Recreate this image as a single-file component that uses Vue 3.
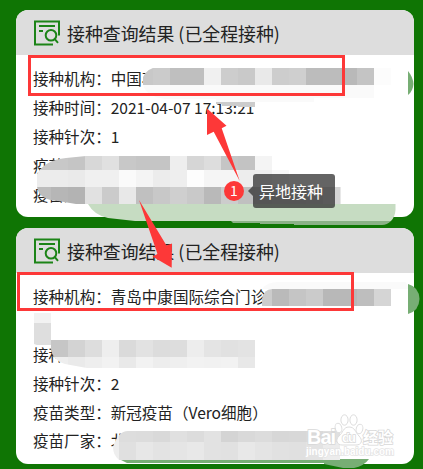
<template>
  <div class="page">
    <section v-for="(card, i) in cards" :key="i" class="card" :class="'card-' + (i + 1)">
      <header class="card-header">
        <svg class="card-icon" viewBox="0 0 26 26">
          <path d="M25 15.500V1.500H1V24.500H19M5 6H21M5 11H9" />
          <circle cx="17" cy="15.200" r="5.300" />
          <path d="M20.800 19.200L24 22.800" />
        </svg>
        <h2>接种查询结果 (已全程接种)</h2>
      </header>
      <ul class="rows">
        <li v-for="(row, n) in card" :key="n">
          <template v-if="row.label">
            <span class="label">{{ row.label }}：</span>
            <span>{{ row.value }}</span>
          </template>
        </li>
      </ul>
    </section>

    <!-- 马赛克与标注层 -->
    <svg class="overlay" viewBox="0 0 423 469">
      <defs>
        <clipPath id="clip-a">
          <path d="M143 85V77Q147 68 158 67H392V96H143Z" />
        </clipPath>
        <clipPath id="clip-b">
          <path d="M37 187V174Q45 160 66 158L86 156H341V204H76L58 201Q39 200 37 187Z" />
        </clipPath>
        <clipPath id="clip-c">
          <path d="M51 340H255V368H87L65 364Q52 360 51 349Z" />
        </clipPath>
        <clipPath id="clip-d">
          <path d="M113 447Q118 431 128 431H341V460H119Q113 455 113 447Z" />
        </clipPath>
        <clipPath id="clip-e">
          <path d="M262 306V299Q264 289 272 289H391V306Z" />
        </clipPath>
      </defs>

      <path class="smear" d="M70 204H395.500V210Q395 217 391 221H135L108 218Q94 215 88 204Z" />
      <path class="smear-dark" d="M231 221H391Q387 225 382 225H294V224H260V223H233Z" />
      <path class="smear-mid" d="M119 459H369Q364 466 354 468H343L324 464V463H127Z" />
      <path class="smear-mid" d="M408 71Q413 77 413.500 84Q413 91 408 95Z" />
      <path class="smear-mid" d="M408 284Q419 287 419.500 299Q419 311 408 314Z" />
      <path class="faint" d="M143 85H374V98H314V102H216V99H165Q147 97 143 85Z" />
      <path class="tick" d="M216 102H255V107H238V106H222V104H216Z" />
      <path class="faint" d="M262 289Q267 282 278 282H405Q408 283 408 289Z" />
      <path class="blot" d="M34 313H51V345H37L34 344Z" />
      <rect class="blot-top" x="34" y="313" width="17" height="10" />

      <g v-for="m in mosaics" :key="m.clip" :clip-path="`url(#${m.clip})`" shape-rendering="crispEdges">
        <rect
          v-for="(c, n) in cells(m)"
          :key="n"
          :x="c.x"
          :y="c.y"
          width="17"
          :height="c.h"
          :fill="c.fill"
        />
      </g>

      <g class="marks">
        <rect x="29.500" y="56.500" width="314" height="38" />
        <rect x="18.500" y="273.500" width="334" height="36" />
      </g>
      <g class="arrows">
        <path d="M207 108.500L226.500 125.700L221.700 128.300L239.700 181L213.700 131.700L207 135Z" />
        <path d="M139 200L166.500 245.500L172 243.500L171.700 267.700L152.500 256.500L157.500 254Z" />
      </g>
    </svg>

    <span class="badge">1</span>
    <div class="tooltip">异地接种</div>

    <svg class="watermark" viewBox="0 0 100 48">
      <g class="paw">
        <ellipse cx="28.500" cy="19" rx="3.300" ry="4.800" transform="rotate(-15 28.500 19)" />
        <ellipse cx="34.500" cy="11" rx="3.600" ry="5.200" />
        <ellipse cx="43.500" cy="11" rx="3.600" ry="5.200" />
        <ellipse cx="49.500" cy="20" rx="3.300" ry="4.800" transform="rotate(15 49.500 20)" />
        <path d="M39 18C33 18 33 24 29 27C25 31 27 36 32 36H46C52 36 53 31 49 27C45 23 45 18 39 18Z" />
      </g>
      <text class="brand" x="-3" y="35" textLength="29">Bai</text>
      <text class="du" x="32" y="33" textLength="14">du</text>
      <text class="brand cn" x="53" y="34" textLength="30">经验</text>
      <text class="url" x="-4" y="46" textLength="88">jingyan.baidu.com</text>
    </svg>
  </div>
</template>

<script setup>
const cards = [
  [
    { label: '接种机构', value: '中国石' },
    { label: '接种时间', value: '2021-04-07 17:13:21' },
    { label: '接种针次', value: '1' },
    { label: '疫苗类型', value: '' },
    { label: '疫苗厂家', value: '' },
  ],
  [
    { label: '接种机构', value: '青岛中康国际综合门诊' },
    // 机构名称折行后留下的空行
    { label: '', value: '' },
    { label: '接种时间', value: '' },
    { label: '接种针次', value: '2' },
    { label: '疫苗类型', value: '新冠疫苗（Vero细胞）' },
    { label: '疫苗厂家', value: '北' },
  ],
]

// 每行: 起始 x, y, 高度, 灰度
const mosaics = [
  {
    clip: 'clip-a',
    rows: [[136, 68, 17, 'c8 cb bf bf f0 cd c9 e9 cd cf bc bc b9 c4 fc']],
  },
  {
    clip: 'clip-b',
    rows: [
      [34, 156, 14, 'c8 c8 c5 d8 e0 c8 c5 c5 ee d6 dd c5 c3 f4'],
      [34, 170, 17, 'ec ec ea f0 f0 fa f4 ec ee fd f5 f5 ed ee f7'],
      [34, 187, 17, 'bd b6 b3 e1 cb e8 c0 c8 cf c9 b9 cc c0 c4 c8 c5 cc d5 e8'],
    ],
  },
  {
    clip: 'clip-c',
    rows: [
      [51, 340, 17, 'c6 d3 dd ee da e2 dc dd ed e4 e1 e3'],
      [51, 357, 11, 'ee ea ee f2 e9 f2 ed ef f2 f1 f2 e8'],
    ],
  },
  {
    clip: 'clip-d',
    rows: [
      [102, 431, 11, 'ee dd dc d9 e0 dc e2 d4 d9 dc d7 d8 da e0'],
      [102, 442, 18, 'ee e0 e7 e3 e5 e8 e2 e1 e8 e4 e1 e0 e3 ec'],
    ],
  },
  {
    clip: 'clip-e',
    rows: [[255, 289, 17, 'cc ba c5 cb b8 b8 be d5']],
  },
]

function cells(m) {
  return m.rows.flatMap(([x, y, h, tones]) =>
    tones.split(' ').map((t, n) => ({ x: x + n * 17, y, h, fill: `#${t}${t}${t}` }))
  )
}
</script>

<style>
body {
  margin: 0;
}
</style>

<style scoped>
.page {
  position: relative;
  box-sizing: border-box;
  width: 423px;
  height: 469px;
  padding: 10px 9px 0 16px;
  overflow: hidden;
  background: #0f7504;
  font-family: "Noto Sans CJK SC", sans-serif;
  color: #222;
}

.card {
  height: 207px;
  margin-bottom: 11px;
  border-radius: 12px;
  background: #fff;
  overflow: hidden;
}

.card-2 {
  height: 236px;
}

.card-header {
  display: flex;
  align-items: center;
  gap: 7px;
  height: 45px;
  padding: 0 18px;
  background: #ddd;
}

.card-icon {
  width: 26px;
  height: 26px;
  fill: none;
  stroke: #1c8417;
  stroke-width: 2;
}

h2 {
  margin: 0;
  font-size: 17.900px;
  font-weight: 400;
  line-height: 26px;
  white-space: nowrap;
}

.rows {
  margin: 0;
  padding: 9px 0 0 17px;
  list-style: none;
}

.rows li {
  display: flex;
  height: 28.900px;
  font-size: 15.550px;
  line-height: 29px;
  white-space: nowrap;
}

.overlay {
  position: absolute;
  top: 0;
  left: 0;
  width: 423px;
  height: 469px;
}

.smear {
  fill: #c6dcc2;
}

.smear-dark {
  fill: #8bb287;
}

.smear-mid {
  fill: #77ae74;
}

.faint {
  fill: #fafafa;
}

.tick {
  fill: #ccc;
}

.blot {
  fill: #dedede;
}

.blot-top {
  fill: #f2f2f2;
}

.marks {
  fill: none;
  stroke: #fd3838;
  stroke-width: 3;
}

.arrows {
  fill: #fd3838;
}

.badge {
  position: absolute;
  top: 181px;
  left: 224px;
  width: 20px;
  height: 20px;
  border-radius: 50%;
  background: #fd3838;
  color: #fff;
  font-size: 14px;
  line-height: 19px;
  text-align: center;
}

.tooltip {
  position: absolute;
  top: 174px;
  left: 253px;
  width: 76px;
  height: 34px;
  padding-left: 6px;
  border-radius: 3px;
  background: rgba(48, 48, 48, 0.750);
  color: #fff;
  font-size: 16px;
  line-height: 34px;
  white-space: nowrap;
}

.tooltip::before {
  content: "";
  position: absolute;
  top: 12px;
  left: -5px;
  border: solid transparent;
  border-width: 5px 5px 5px 0;
  border-right-color: rgba(48, 48, 48, 0.750);
}

.watermark {
  position: absolute;
  top: 409px;
  left: 310px;
  width: 100px;
  height: 48px;
  overflow: visible;
}

.paw {
  fill: #fff;
  stroke: #ddd;
  stroke-width: 1;
}

.brand,
.url,
.du {
  font-family: "Liberation Sans", "Noto Sans CJK SC", sans-serif;
  font-weight: 700;
  fill: #fff;
  stroke: #d8d8d8;
  stroke-width: 1.500px;
  paint-order: stroke;
}

.brand {
  font-size: 20px;
}

.cn {
  font-size: 15px;
}

.du {
  font-size: 13px;
}

.url {
  font-size: 10px;
  stroke: #e4e4e4;
}
</style>
